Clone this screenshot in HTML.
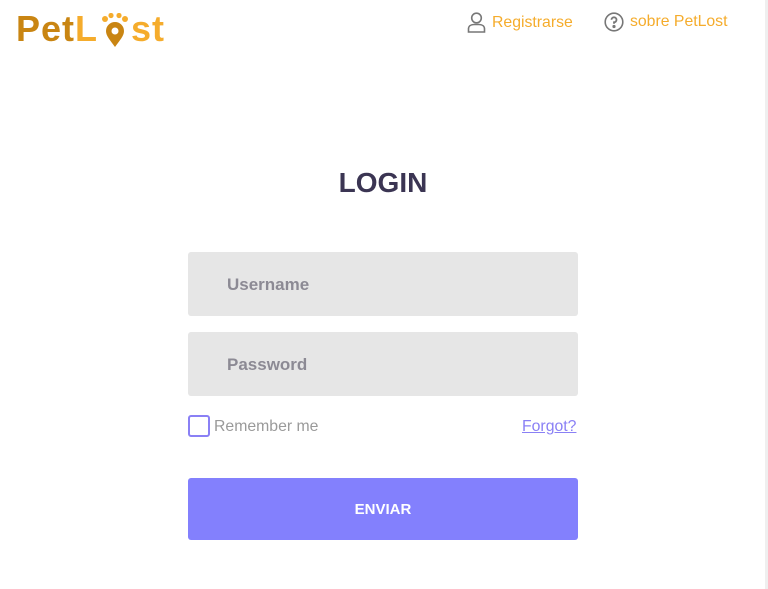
<!DOCTYPE html>
<html><head><meta charset="utf-8"><style>
*{margin:0;padding:0;box-sizing:border-box}
body{width:768px;height:589px;background:#fff;font-family:"Liberation Sans",sans-serif;position:relative;overflow:hidden}
.logo{position:absolute;left:16px;top:8px;font-size:36px;font-weight:bold;letter-spacing:1px;color:#c98512;display:flex;align-items:baseline}
.logo .l{color:#f5ac2c}
.nav{position:absolute;top:12px;font-size:15.8px;color:#f5ac2c;display:flex;align-items:center}
.nav svg{margin-right:6px}
h1{position:absolute;left:0;width:766px;text-align:center;top:167px;font-size:28px;color:#3b3553;font-weight:bold}
.in{position:absolute;left:188px;width:390px;height:64px;background:#e6e6e6;border-radius:3px;font-size:17px;font-weight:bold;color:#8c8a94;padding-left:39px;line-height:66px}
.cb{position:absolute;left:188px;top:415px;width:22px;height:22px;border:2px solid #8a80f5;border-radius:3px}
.rm{position:absolute;left:214px;top:418px;font-size:15.8px;color:#9a9a9a}
.fg{position:absolute;left:522px;top:418px;font-size:15.8px;color:#8a80f5;text-decoration:underline}
.btn{position:absolute;left:188px;top:478px;width:390px;height:62px;background:#8380fd;border-radius:3px;color:#fff;font-weight:bold;font-size:15px;text-align:center;line-height:64px}
.sb{position:absolute;right:0;top:0;width:3px;height:589px;background:#efefef}
</style></head><body>
<div class="logo"><span>Pet</span><span class="l">L</span><svg width="32" height="36" viewBox="0 0 30 36" style="margin:0 0 0 1px;align-self:center;position:relative;top:2px"><circle cx="5" cy="6" r="3" fill="#f5ac2c"/><circle cx="11" cy="2.5" r="2.6" fill="#f5ac2c"/><circle cx="19" cy="2.5" r="2.6" fill="#f5ac2c"/><circle cx="25" cy="6" r="3" fill="#f5ac2c"/><path d="M15 34 C10 27 6 23 6 18 A9 9 0 0 1 24 18 C24 23 20 27 15 34Z" fill="#c98512"/><circle cx="15" cy="18" r="3.5" fill="#fff"/></svg><span class="l">st</span></div>
<div class="nav" style="left:467px"><svg width="19" height="21" viewBox="0 0 19 21" fill="none" stroke="#777" stroke-width="1.6"><circle cx="9.5" cy="6" r="4.8"/><path d="M1.5 20 V17 C1.5 14 4 12.5 7 12.5 H12 C15 12.5 17.5 14 17.5 17 V20 Z"/></svg>Registrarse</div>
<div class="nav" style="left:604px"><svg width="20" height="20" viewBox="0 0 20 20" fill="none" stroke="#777" stroke-width="1.6"><circle cx="10" cy="10" r="8.8"/><path d="M7.5 7.8 A2.5 2.5 0 1 1 10 10.3 V11.8" stroke-width="1.8"/><circle cx="10" cy="14.5" r="0.8" fill="#777"/></svg>sobre PetLost</div>
<h1>LOGIN</h1>
<div class="in" style="top:252px">Username</div>
<div class="in" style="top:332px">Password</div>
<div class="cb"></div>
<div class="rm">Remember me</div>
<div class="fg">Forgot?</div>
<div class="btn">ENVIAR</div>
<div class="sb"></div>
</body></html>
